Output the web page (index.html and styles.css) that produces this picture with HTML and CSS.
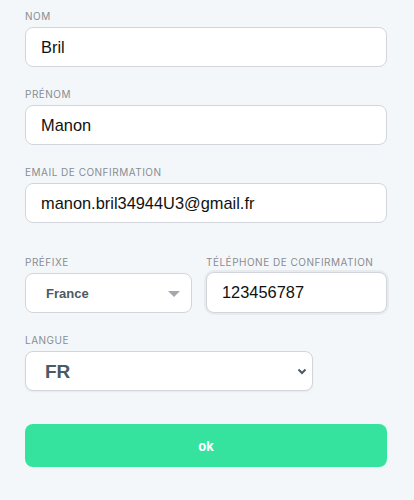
FILE: index.html
```html
<!DOCTYPE html>
<html lang="fr">
<head>
    <meta charset="UTF-8">
    <meta name="viewport" content="width=device-width, initial-scale=1.0">
    <title>Confirmation</title>
    <link rel="stylesheet" href="styles.css">
</head>
<body>
    <form class="form">
        <div class="field">
            <label class="label">Nom</label>
            <input class="input" type="text" value="Bril">
        </div>

        <div class="field">
            <label class="label">Prénom</label>
            <input class="input" type="text" value="Manon">
        </div>

        <div class="field field-email">
            <label class="label">Email de confirmation</label>
            <input class="input" type="email" value="manon.bril34944U3@gmail.fr">
        </div>

        <div class="row">
            <div class="field prefix">
                <label class="label">Préfixe</label>
                <div class="select-wrap">
                    <select class="select select-prefix">
                        <option>France</option>
                    </select>
                    <svg class="caret" width="12" height="6" viewBox="0 0 12 6">
                        <path d="M0 0 L12 0 L6 6 Z" fill="#a3a8ad"/>
                    </svg>
                </div>
            </div>
            <div class="field phone">
                <label class="label">Téléphone de confirmation</label>
                <input class="input input-focus" type="tel" value="123456787">
            </div>
        </div>

        <div class="field field-lang">
            <label class="label">Langue</label>
            <div class="select-wrap lang">
                <select class="select select-lang">
                    <option>FR</option>
                </select>
                <svg class="chevron" width="10" height="7" viewBox="0 0 10 7">
                    <path d="M1.5 1.5 L5 5 L8.5 1.5" fill="none" stroke="#4b5a63" stroke-width="2"/>
                </svg>
            </div>
        </div>

        <button class="btn" type="button">ok</button>
    </form>
</body>
</html>
```

FILE: styles.css
```css
body {
    margin: 0;
    padding: 0;
    background-color: #f4f7f9;
    font-family: "Liberation Sans", Arial, sans-serif;
}

.form {
    padding: 10px 27px 0 25px;
}

.field {
    margin-bottom: 21px;
}

.field-email {
    margin-bottom: 33px;
}

.row .field {
    margin-bottom: 21px;
}

.field-lang {
    margin-bottom: 33px;
}

.label {
    display: block;
    font-family: Inter, "Liberation Sans", sans-serif;
    font-size: 10px;
    line-height: 12px;
    letter-spacing: 0.5px;
    text-transform: uppercase;
    color: #878d94;
    margin-bottom: 5px;
}

.input,
.select {
    display: block;
    box-sizing: border-box;
    width: 100%;
    height: 40px;
    margin: 0;
    padding: 0 15px;
    border: 1px solid #d2d6dc;
    border-radius: 8px;
    background-color: #fff;
    font-family: "Liberation Sans", Arial, sans-serif;
    font-size: 16.4px;
    color: #111;
    outline: none;
}

.input-focus {
    box-shadow: 0 0 0 2px #e8ebee;
}

.row {
    display: flex;
    gap: 14px;
}

.prefix {
    width: 167px;
    flex-shrink: 0;
}

.phone {
    flex: 1;
}

.phone .label {
    margin-bottom: 4px;
}

.phone .input {
    height: 41px;
}

.select-wrap {
    position: relative;
}

.select {
    -webkit-appearance: none;
    appearance: none;
    font-weight: bold;
    color: #4b5a63;
}

.select-prefix {
    padding-left: 20px;
    font-size: 13px;
}

.caret {
    position: absolute;
    top: 18px;
    right: 12px;
}

.lang {
    width: 288px;
}

.select-lang {
    padding-left: 19px;
    font-size: 19px;
    box-shadow: 0 1px 2px rgba(0, 0, 0, 0.06);
}

.chevron {
    position: absolute;
    top: 17px;
    right: 6px;
}

.btn {
    display: block;
    width: 100%;
    height: 43px;
    border: none;
    border-radius: 8px;
    background-color: #35e39f;
    color: #fff;
    font-family: Inter, "Liberation Sans", sans-serif;
    font-size: 13px;
    font-weight: bold;
}
```
